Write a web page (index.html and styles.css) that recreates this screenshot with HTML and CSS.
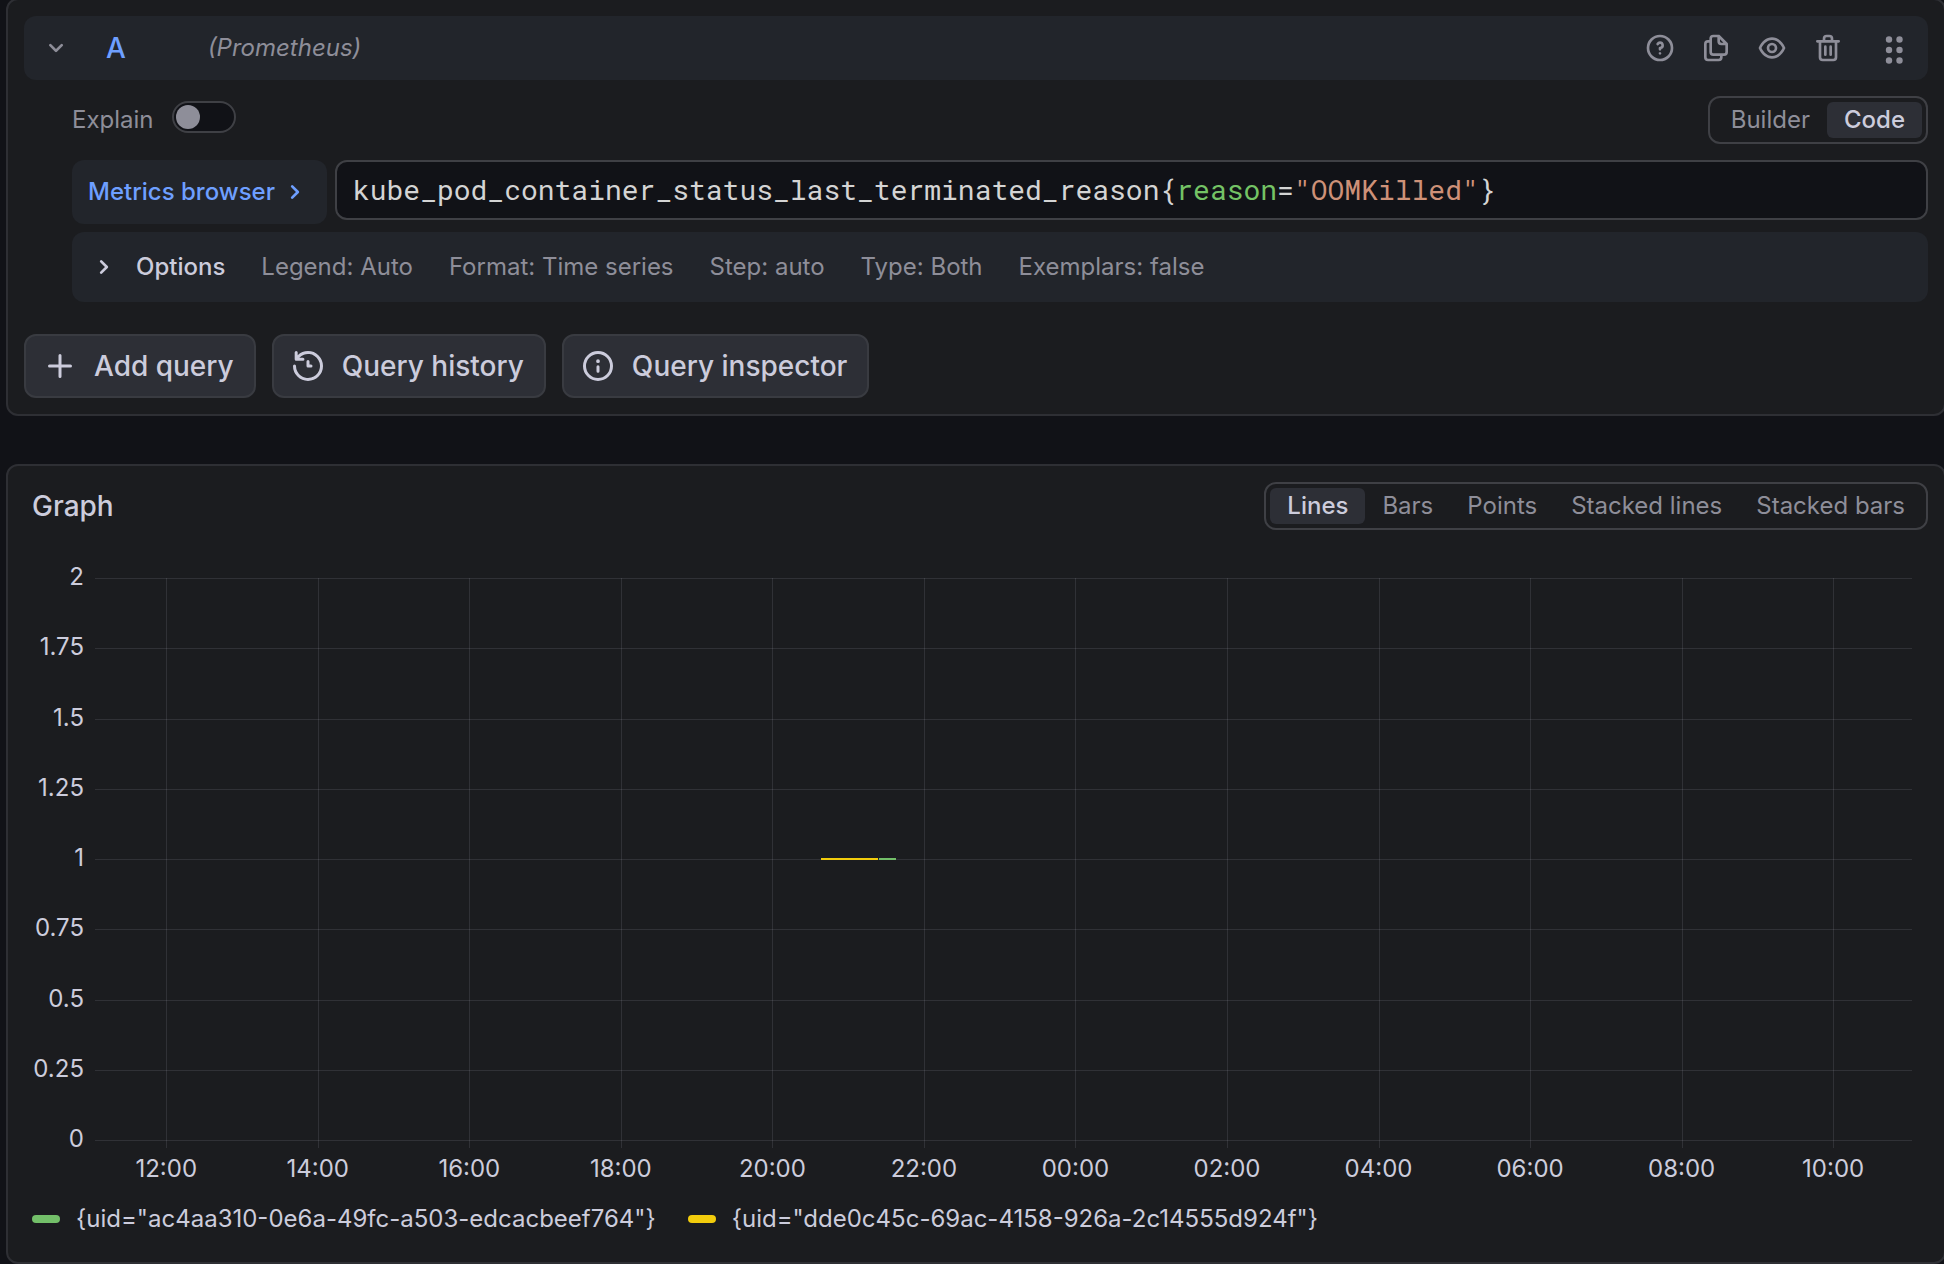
FILE: index.html
```html
<!DOCTYPE html>
<html lang="en">
<head>
<meta charset="utf-8">
<meta name="viewport" content="width=device-width, initial-scale=1">
<title>Explore</title>
<link rel="stylesheet" href="styles.css">
</head>
<body>
<main class="explore">
  <section class="panel query-panel" aria-label="Queries">
    <header class="query-header">
      <button class="icon-button" type="button" aria-label="Collapse query">
        <svg class="icon" viewBox="0 0 24 24"><path d="M17,9.17a1,1,0,0,0-1.41,0L12,12.71,8.46,9.17a1,1,0,0,0-1.41,0,1,1,0,0,0,0,1.42l4.24,4.24a1,1,0,0,0,1.42,0L17,10.59A1,1,0,0,0,17,9.17Z"/></svg>
      </button>
      <button class="query-name" type="button">A</button>
      <em class="query-source">(Prometheus)</em>
      <div class="query-actions">
        <button class="icon-button" type="button" aria-label="Show data source help">
          <svg class="icon" viewBox="0 0 24 24"><path d="M11.29,15.29a1.58,1.58,0,0,0-.12.15.76.76,0,0,0-.09.18.64.64,0,0,0-.06.18,1.36,1.36,0,0,0,0,.2.84.84,0,0,0,.08.38.9.9,0,0,0,.54.54.94.94,0,0,0,.76,0,.9.9,0,0,0,.54-.54A1,1,0,0,0,13,16a1,1,0,0,0-.29-.71A1,1,0,0,0,11.29,15.29ZM12,2A10,10,0,1,0,22,12,10,10,0,0,0,12,2Zm0,18a8,8,0,1,1,8-8A8,8,0,0,1,12,20ZM12,7A3,3,0,0,0,9.4,8.5a1,1,0,1,0,1.73,1A1,1,0,0,1,12,9a1,1,0,0,1,0,2,1,1,0,0,0-1,1v1a1,1,0,0,0,2,0v-.18A3,3,0,0,0,12,7Z"/></svg>
        </button>
        <button class="icon-button" type="button" aria-label="Duplicate query">
          <svg class="icon" viewBox="0 0 24 24"><path d="M21,8.94a1.31,1.31,0,0,0-.06-.27l0-.09a1.07,1.07,0,0,0-.19-.28h0l-6-6h0a1.07,1.07,0,0,0-.28-.19.32.32,0,0,0-.09,0A.88.88,0,0,0,14.05,2H10A3,3,0,0,0,7,5V6H6A3,3,0,0,0,3,9V19a3,3,0,0,0,3,3h8a3,3,0,0,0,3-3V18h1a3,3,0,0,0,3-3V9S21,9,21,8.94ZM15,5.41,17.59,8H16a1,1,0,0,1-1-1ZM15,19a1,1,0,0,1-1,1H6a1,1,0,0,1-1-1V9A1,1,0,0,1,6,8H7v7a3,3,0,0,0,3,3h5Zm4-4a1,1,0,0,1-1,1H10a1,1,0,0,1-1-1V5a1,1,0,0,1,1-1h3V7a3,3,0,0,0,3,3h3Z"/></svg>
        </button>
        <button class="icon-button" type="button" aria-label="Hide response">
          <svg class="icon" viewBox="0 0 24 24"><path d="M21.92,11.6C19.9,6.91,16.1,4,12,4S4.1,6.91,2.08,11.6a1,1,0,0,0,0,.8C4.1,17.09,7.9,20,12,20s7.9-2.91,9.92-7.6A1,1,0,0,0,21.92,11.6ZM12,18c-3.17,0-6.17-2.29-7.9-6C5.83,8.29,8.83,6,12,6s6.17,2.29,7.9,6C18.17,15.71,15.17,18,12,18ZM12,8a4,4,0,1,0,4,4A4,4,0,0,0,12,8Zm0,6a2,2,0,1,1,2-2A2,2,0,0,1,12,14Z"/></svg>
        </button>
        <button class="icon-button" type="button" aria-label="Remove query">
          <svg class="icon" viewBox="0 0 24 24"><path d="M10,18a1,1,0,0,0,1-1V11a1,1,0,0,0-2,0v6A1,1,0,0,0,10,18ZM20,6H16V5a3,3,0,0,0-3-3H11A3,3,0,0,0,8,5V6H4A1,1,0,0,0,4,8H5V19a3,3,0,0,0,3,3h8a3,3,0,0,0,3-3V8h1a1,1,0,0,0,0-2ZM10,5a1,1,0,0,1,1-1h2a1,1,0,0,1,1,1V6H10Zm7,14a1,1,0,0,1-1,1H8a1,1,0,0,1-1-1V8H17Zm-3-1a1,1,0,0,0,1-1V11a1,1,0,0,0-2,0v6A1,1,0,0,0,14,18Z"/></svg>
        </button>
        <button class="icon-button drag-handle" type="button" aria-label="Drag to reorder">
          <svg class="icon" viewBox="0 0 32 32"><circle cx="11" cy="7.500" r="3.200"/><circle cx="21.500" cy="7.500" r="3.200"/><circle cx="11" cy="18" r="3.200"/><circle cx="21.500" cy="18" r="3.200"/><circle cx="11" cy="28.500" r="3.200"/><circle cx="21.500" cy="28.500" r="3.200"/></svg>
        </button>
      </div>
    </header>

    <div class="query-body">
      <div class="mode-row">
        <label class="explain-label" for="explain">Explain</label>
        <input class="switch" type="checkbox" role="switch" id="explain">
        <div class="radio-group editor-mode" role="radiogroup" aria-label="Editor mode">
          <label class="radio-option"><input type="radio" name="mode">Builder</label>
          <label class="radio-option"><input type="radio" name="mode" checked>Code</label>
        </div>
      </div>

      <div class="editor-row">
        <button class="metrics-button" type="button">Metrics browser<svg class="icon" viewBox="0 0 24 24" aria-hidden="true"><path d="M14.83,11.29,10.59,7.05a1,1,0,0,0-1.42,0,1,1,0,0,0,0,1.41L12.710,12,9.17,15.54a1,1,0,0,0,0,1.41,1,1,0,0,0,.71.29,1,1,0,0,0,.71-.29l4.24-4.24A1,1,0,0,0,14.83,11.29Z"/></svg></button>
        <div class="code-editor">
          <code class="code-layer" aria-hidden="true">kube_pod_container_status_last_terminated_reason{<span class="tok-label">reason</span>=<span class="tok-string">"OOMKilled"</span>}</code>
          <input class="code-input" type="text" aria-label="PromQL query" spellcheck="false" value="kube_pod_container_status_last_terminated_reason{reason=&quot;OOMKilled&quot;}">
        </div>
      </div>

      <button class="options-row" type="button" aria-expanded="false">
        <svg class="icon" viewBox="0 0 24 24" aria-hidden="true"><path d="M14.83,11.29,10.59,7.05a1,1,0,0,0-1.42,0,1,1,0,0,0,0,1.41L12.710,12,9.17,15.54a1,1,0,0,0,0,1.41,1,1,0,0,0,.71.29,1,1,0,0,0,.71-.29l4.24-4.24A1,1,0,0,0,14.83,11.29Z"/></svg>
        <span class="options-title">Options</span>
        <span>Legend: Auto</span>
        <span>Format: Time series</span>
        <span>Step: auto</span>
        <span>Type: Both</span>
        <span>Exemplars: false</span>
      </button>
    </div>

    <div class="query-footer">
      <button class="button" type="button"><svg class="icon icon-large" viewBox="0 0 24 24" aria-hidden="true"><path d="M19,11H13V5a1,1,0,0,0-2,0v6H5a1,1,0,0,0,0,2h6v6a1,1,0,0,0,2,0V13h6a1,1,0,0,0,0-2Z"/></svg>Add query</button>
      <button class="button" type="button"><svg class="icon icon-large" viewBox="0 0 24 24" aria-hidden="true"><path d="M12,2A10,10,0,0,0,5.12,4.77V3a1,1,0,0,0-2,0V7.5a1,1,0,0,0,1,1H8.62a1,1,0,0,0,0-2H6.22A8,8,0,1,1,4,12a1,1,0,0,0-2,0A10,10,0,1,0,12,2Zm0,6a1,1,0,0,0-1,1v3a1,1,0,0,0,1,1h2a1,1,0,0,0,0-2H13V9A1,1,0,0,0,12,8Z"/></svg>Query history</button>
      <button class="button" type="button"><svg class="icon icon-large" viewBox="0 0 24 24" aria-hidden="true"><path d="M12,2A10,10,0,1,0,22,12,10,10,0,0,0,12,2Zm0,18a8,8,0,1,1,8-8A8,8,0,0,1,12,20Zm0-8.5a1,1,0,0,0-1,1v3a1,1,0,0,0,2,0v-3A1,1,0,0,0,12,11.5Zm0-4a1.25,1.25,0,1,0,1.25,1.25A1.25,1.25,0,0,0,12,7.5Z"/></svg>Query inspector</button>
    </div>
  </section>

  <section class="panel graph-panel" aria-labelledby="graph-title">
    <header class="graph-header">
      <h2 class="graph-title" id="graph-title">Graph</h2>
      <div class="radio-group" role="radiogroup" aria-label="Graph style">
        <label class="radio-option"><input type="radio" name="style" checked>Lines</label>
        <label class="radio-option"><input type="radio" name="style">Bars</label>
        <label class="radio-option"><input type="radio" name="style">Points</label>
        <label class="radio-option"><input type="radio" name="style">Stacked lines</label>
        <label class="radio-option"><input type="radio" name="style">Stacked bars</label>
      </div>
    </header>

    <div class="chart">
      <svg class="plot" role="img" aria-label="Time series graph">
        <g class="grid">
          <rect y="0" width="100%" height="1"/><rect y="70" width="100%" height="1"/><rect y="141" width="100%" height="1"/><rect y="211" width="100%" height="1"/><rect y="281" width="100%" height="1"/><rect y="351" width="100%" height="1"/><rect y="422" width="100%" height="1"/><rect y="492" width="100%" height="1"/><rect y="562" width="100%" height="1"/>
          <rect x="3.92%" width="1" height="570"/><rect x="12.26%" width="1" height="570"/><rect x="20.6%" width="1" height="570"/><rect x="28.94%" width="1" height="570"/><rect x="37.28%" width="1" height="570"/><rect x="45.62%" width="1" height="570"/><rect x="53.96%" width="1" height="570"/><rect x="62.3%" width="1" height="570"/><rect x="70.64%" width="1" height="570"/><rect x="78.98%" width="1" height="570"/><rect x="87.32%" width="1" height="570"/><rect x="95.66%" width="1" height="570"/>
        </g>
        <g class="y-labels">
          <text x="-11" y="7">2</text><text x="-11" y="77">1.75</text><text x="-11" y="148">1.5</text><text x="-11" y="218">1.25</text><text x="-11" y="288">1</text><text x="-11" y="358">0.75</text><text x="-11" y="429">0.5</text><text x="-11" y="499">0.25</text><text x="-11" y="569">0</text>
        </g>
        <g class="x-labels">
          <text x="3.92%" y="599">12:00</text><text x="12.26%" y="599">14:00</text><text x="20.6%" y="599">16:00</text><text x="28.94%" y="599">18:00</text><text x="37.28%" y="599">20:00</text><text x="45.62%" y="599">22:00</text><text x="53.96%" y="599">00:00</text><text x="62.3%" y="599">02:00</text><text x="70.64%" y="599">04:00</text><text x="78.98%" y="599">06:00</text><text x="87.32%" y="599">08:00</text><text x="95.66%" y="599">10:00</text>
        </g>
        <rect class="series-yellow" x="39.96%" y="280" width="3.14%" height="2"/>
        <rect class="series-green" x="43.15%" y="280" width="0.94%" height="2"/>
      </svg>
    </div>

    <ul class="legend">
      <li><button class="legend-item" type="button"><span class="swatch swatch-green"></span>{uid="ac4aa310-0e6a-49fc-a503-edcacbeef764"}</button></li>
      <li><button class="legend-item" type="button"><span class="swatch swatch-yellow"></span>{uid="dde0c45c-69ac-4158-926a-2c14555d924f"}</button></li>
    </ul>
  </section>
</main>
</body>
</html>
```

FILE: styles.css
```css
:root {
  --canvas: #111217;
  --panel: #1b1c1f;
  --secondary: #22252b;
  --raised: #2d2f36;
  --border-weak: #2e2f34;
  --border: #3f4045;
  --text: #ccccdc;
  --text-muted: #8e8e99;
  --link: #6e9fff;
  --green: #73bf69;
  --yellow: #f2cc0c;
}

* {
  box-sizing: border-box;
}

body {
  margin: 0;
  background: var(--canvas);
  color: var(--text);
  font: 24px/36px Inter, "Liberation Sans", sans-serif;
  overflow-x: hidden;
}

button {
  margin: 0;
  padding: 0;
  border: 0;
  background: none;
  color: inherit;
  font: inherit;
  cursor: pointer;
}

.explore {
  display: flex;
  flex-direction: column;
  gap: 48px;
  margin: -2px -2px 0 6px;
}

.panel {
  border: 2px solid var(--border-weak);
  border-radius: 12px;
  background: var(--panel);
}

.query-panel {
  padding: 16px;
}

.icon {
  display: block;
  width: 32px;
  height: 32px;
  flex: none;
  fill: currentColor;
}

.icon-large {
  width: 36px;
  height: 36px;
}

.icon-button {
  color: var(--text-muted);
}

.query-header {
  display: flex;
  align-items: center;
  height: 64px;
  padding: 0 18px 0 16px;
  border-radius: 12px;
  background: var(--secondary);
}

.query-name {
  margin-left: 34px;
  color: var(--link);
  font-size: 28px;
  font-weight: 500;
}

.query-source {
  margin-left: 82px;
  color: var(--text-muted);
}

.query-actions {
  display: flex;
  gap: 24px;
  margin-left: auto;
}

.drag-handle {
  margin-left: 10px;
}

.query-body {
  padding: 16px 0 0 48px;
}

.mode-row {
  display: flex;
  align-items: center;
  height: 48px;
}

.explain-label {
  color: var(--text-muted);
}

.switch {
  display: flex;
  align-items: center;
  width: 64px;
  height: 32px;
  margin: 0 0 6px 18px;
  padding: 0 2px;
  appearance: none;
  border: 2px solid var(--border);
  border-radius: 16px;
  background: var(--canvas);
}

.switch::before {
  content: "";
  width: 24px;
  height: 24px;
  border-radius: 50%;
  background: var(--text-muted);
}

.switch:checked {
  justify-content: flex-end;
}

.radio-group {
  display: flex;
  margin-left: auto;
  padding: 4px;
  border: 2px solid var(--border);
  border-radius: 12px;
}

.radio-option {
  display: flex;
  padding: 0 17px;
  border-radius: 6px;
  color: var(--text-muted);
  cursor: pointer;
}

.radio-option input {
  width: 0;
  height: 0;
  margin: 0;
  appearance: none;
}

.radio-option:has(:checked) {
  background: var(--raised);
  color: var(--text);
  font-weight: 500;
}

.editor-row {
  display: flex;
  align-items: flex-start;
  gap: 8px;
  margin-top: 16px;
}

.metrics-button {
  display: flex;
  align-items: center;
  gap: 4px;
  height: 64px;
  padding: 0 16px;
  border-radius: 12px;
  background: var(--secondary);
  color: var(--link);
  font-weight: 500;
  white-space: nowrap;
}

.code-editor {
  display: grid;
  flex: 1;
  min-width: 0;
  border: 2px solid var(--border);
  border-radius: 12px;
  background: var(--canvas);
}

.code-layer,
.code-input {
  grid-area: 1 / 1;
  width: 100%;
  min-width: 0;
  height: 56px;
  padding: 0 16px;
  border: 0;
  font: 28px/56px "Roboto Mono", "DejaVu Sans Mono", monospace;
}

.code-layer {
  overflow: hidden;
  color: #d4d4d4;
  white-space: pre;
}

.code-input {
  background: none;
  color: transparent;
  caret-color: var(--text);
  outline: 0;
}

.tok-label {
  color: #74c365;
}

.tok-string {
  color: #ce9178;
}

.options-row {
  display: flex;
  align-items: center;
  gap: 36px;
  width: 100%;
  height: 70px;
  margin-top: 8px;
  padding: 0 16px;
  border-radius: 12px;
  background: var(--secondary);
  color: var(--text-muted);
  text-align: left;
}

.options-row .icon {
  fill: var(--text);
}

.options-title {
  margin-left: -20px;
  color: var(--text);
  font-weight: 500;
}

.query-footer {
  display: flex;
  gap: 16px;
  margin-top: 32px;
}

.button {
  display: flex;
  align-items: center;
  gap: 16px;
  height: 64px;
  padding: 0 20px 0 16px;
  border: 2px solid #393b41;
  border-radius: 12px;
  background: var(--raised);
  font-size: 28px;
  font-weight: 500;
}

.graph-header {
  display: flex;
  align-items: center;
  padding: 16px 16px 0 24px;
}

.graph-title {
  margin: 0;
  font-size: 28px;
  font-weight: 500;
}

.chart {
  padding: 48px 32px 0 87px;
}

.plot {
  display: block;
  width: 100%;
  height: 616px;
  overflow: visible;
}

.plot text {
  fill: var(--text);
}

.y-labels {
  text-anchor: end;
}

.x-labels {
  text-anchor: middle;
}

.grid {
  fill: #ccccdc;
  fill-opacity: 0.12;
  shape-rendering: crispEdges;
}

.series-yellow,
.series-green {
  shape-rendering: crispEdges;
}

.series-yellow {
  fill: var(--yellow);
}

.series-green {
  fill: var(--green);
}

.legend {
  display: flex;
  flex-wrap: wrap;
  gap: 32px;
  margin: 0;
  padding: 7px 24px 25px;
  list-style: none;
}

.legend-item {
  display: flex;
  align-items: center;
  gap: 16px;
}

.swatch {
  width: 28px;
  height: 8px;
  border-radius: 4px;
}

.swatch-green {
  background: var(--green);
}

.swatch-yellow {
  background: var(--yellow);
}
```
